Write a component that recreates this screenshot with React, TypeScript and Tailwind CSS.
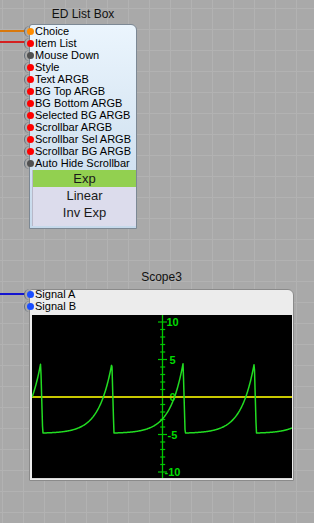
import React from "react";

const FONT = { fontFamily: '"Liberation Sans", Arial, sans-serif' };

type Port = { label: string; color: string };

const ports: Port[] = [
  { label: "Choice", color: "#ff8c00" },
  { label: "Item List", color: "#ff0000" },
  { label: "Mouse Down", color: "#505050" },
  { label: "Style", color: "#ff0000" },
  { label: "Text ARGB", color: "#ff0000" },
  { label: "BG Top ARGB", color: "#ff0000" },
  { label: "BG Bottom ARGB", color: "#ff0000" },
  { label: "Selected BG ARGB", color: "#ff0000" },
  { label: "Scrollbar ARGB", color: "#ff0000" },
  { label: "Scrollbar Sel ARGB", color: "#ff0000" },
  { label: "Scrollbar BG ARGB", color: "#ff0000" },
  { label: "Auto Hide Scrollbar", color: "#505050" },
];

function PortRow({ label, color }: Port) {
  return (
    <div className="flex items-center h-[12px] -ml-[6px]">
      <span className="w-[11px] h-[11px] rounded-full border-l-[1.5px] border-[#66707a] flex items-center justify-center shrink-0">
        <span className="w-[7px] h-[7px] rounded-full" style={{ background: color }} />
      </span>
      <span className="ml-[0px] text-[11px] leading-[12px] text-black whitespace-nowrap">{label}</span>
    </div>
  );
}

function Wave() {
  const T = 69.2;
  const P = 71.2;
  const a = 5.3;
  const vmin = -4.8;
  const vmax = 4.5;
  const vy = (v: number) => 82 - v * 7.5;
  const pts: string[] = [];
  for (let x = 0; x <= 260; x += 0.5) {
    const ph = (((x - 10.7) % P) + P) % P;
    let v: number;
    if (ph <= T) {
      v = vmin + ((vmax - vmin) * (Math.exp((a * ph) / T) - 1)) / (Math.exp(a) - 1);
    } else {
      v = vmax + ((vmin - vmax) * (ph - T)) / (P - T);
    }
    pts.push(`${x.toFixed(1)},${vy(v).toFixed(2)}`);
  }
  const ticks: React.ReactNode[] = [];
  for (let u = -10; u <= 10; u++) {
    const y = vy(u);
    const major = u % 5 === 0;
    ticks.push(
      <line
        key={u}
        x1={major ? 126 : 128.2}
        x2={major ? 135 : 133.2}
        y1={y}
        y2={y}
        stroke="#00c800"
        strokeWidth={1.2}
      />
    );
  }
  const labels = [10, 5, 0, -5, -10];
  return (
    <svg width={260} height={163} className="block">
      <rect width={260} height={163} fill="#000" />
      <line x1={130.5} x2={130.5} y1={0} y2={163} stroke="#00c800" strokeWidth={1.3} />
      {ticks}
      {labels.map((l) => (
        <text
          key={l}
          x={140.5}
          y={vy(l) + 4}
          textAnchor="middle"
          fontFamily='"Liberation Sans", Arial, sans-serif'
          fontWeight="bold"
          fontSize={11}
          fill="#00dc00"
        >
          {l}
        </text>
      ))}
      <line x1={0} x2={260} y1={82} y2={82} stroke="#c8c800" strokeWidth={2} />
      <polyline points={pts.join(" ")} fill="none" stroke="#22dc22" strokeWidth={1.5} strokeLinejoin="round" />
    </svg>
  );
}

export default function App() {
  return (
    <div
      className="relative w-[314px] h-[523px] overflow-hidden bg-[#a9a9a9] bg-[linear-gradient(to_right,#b2b2b2_1px,transparent_1px),linear-gradient(to_bottom,#b2b2b2_1px,transparent_1px)] bg-[size:21px_21px] bg-[position:2px_8px]"
      style={FONT}
    >
      {/* wires */}
      <div className="absolute left-0 top-[30px] w-[25px] h-[2px] bg-[#d8780c]" />
      <div className="absolute left-0 top-[41px] w-[25px] h-[2px] bg-[#d42020]" />
      <div className="absolute left-0 top-[293px] w-[25px] h-[2px] bg-[#1414d0]" />

      {/* ED List Box node */}
      <div className="absolute left-[29px] top-[7px] w-[108px] flex flex-col">
        <div className="h-[14px] text-[12px] leading-[14px] text-[#111] text-center whitespace-nowrap">ED List Box</div>
        <div className="mt-[3px] h-[205px] border border-[#7c8894] rounded-tr-[6px] rounded-tl-[3px] bg-[linear-gradient(to_bottom,#ebf5fd,#c6d9eb)] flex flex-col">
          <div className="flex flex-col">
            {ports.map((p) => (
              <PortRow key={p.label} {...p} />
            ))}
          </div>
          <div className="ml-[2px] mt-[1px] h-[56px] bg-[#dcdcec] border-l border-[#b8b8c8] flex flex-col text-[13px] leading-[17px] text-[#1a1a1a] text-center">
            <div className="h-[17px] bg-[#92d050]">Exp</div>
            <div className="h-[17px]">Linear</div>
            <div className="h-[17px]">Inv Exp</div>
          </div>
        </div>
      </div>

      {/* Scope3 node */}
      <div className="absolute left-[29px] top-[270px] w-[265px] flex flex-col">
        <div className="h-[14px] text-[12px] leading-[14px] text-[#111] text-center whitespace-nowrap">Scope3</div>
        <div className="mt-[5px] h-[192px] border border-[#8a8a8a] rounded-tr-[6px] rounded-tl-[3px] bg-[#ececec] flex flex-col">
          <div className="-mt-[2px] flex flex-col">
            <PortRow label="Signal A" color="#1a4dff" />
            <PortRow label="Signal B" color="#1a4dff" />
          </div>
          <div className="mt-[3px] ml-[2px] border-b border-[#d8d8d8]">
            <Wave />
          </div>
        </div>
      </div>
    </div>
  );
}
